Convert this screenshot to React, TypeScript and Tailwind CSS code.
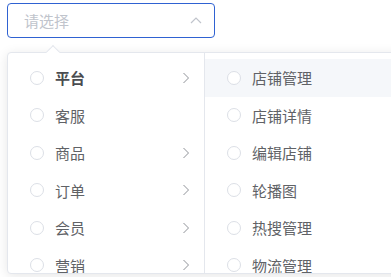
const font = {
  fontFamily: '"Noto Sans CJK SC", "Noto Sans", sans-serif',
};

type Item = { label: string; children?: boolean; active?: boolean; hover?: boolean };

const left: Item[] = [
  { label: "平台", children: true, active: true },
  { label: "客服" },
  { label: "商品", children: true },
  { label: "订单", children: true },
  { label: "会员", children: true },
  { label: "营销", children: true },
];

const right: Item[] = [
  { label: "店铺管理", hover: true },
  { label: "店铺详情" },
  { label: "编辑店铺" },
  { label: "轮播图" },
  { label: "热搜管理" },
  { label: "物流管理" },
];

function Row({ item }: { item: Item }) {
  return (
    <div
      className={`flex items-center h-[37.5px] pl-[22px] pr-[14px] ${
        item.hover ? "bg-[#f5f7fa]" : ""
      }`}
    >
      <span className="w-[14px] h-[14px] rounded-full border border-[#dcdfe6] bg-white shrink-0" />
      <span
        className={`ml-[11px] flex-1 text-[15px] leading-none ${
          item.active ? "font-bold text-[#4a4c50]" : "text-[#606266]"
        }`}
      >
        {item.label}
      </span>
      {item.children && (
        <svg width="8" height="12" viewBox="0 0 8 12" className="mr-[0px]">
          <path d="M1.5 1 L6.5 6 L1.5 11" fill="none" stroke="#909399" strokeWidth="1" />
        </svg>
      )}
    </div>
  );
}

export default function App() {
  return (
    <div className="w-[391px] h-[277px] overflow-hidden bg-white" style={font}>
      <div className="pt-[3px] pl-[7px]">
        <div className="w-[208px] h-[35px] rounded-[4px] border border-[#2f62d2] flex items-center pl-[16px] pr-[12px]">
          <span className="flex-1 text-[15px] text-[#c0c4cc] leading-none">请选择</span>
          <svg width="12" height="7" viewBox="0 0 12 7">
            <path d="M1 6 L6 1 L11 6" fill="none" stroke="#c0c4cc" strokeWidth="1.2" />
          </svg>
        </div>
      </div>
      <div className="relative mt-[14px] ml-[7px] w-[420px] h-[222px] border border-[#e4e7ed] rounded-[4px] bg-white shadow-[0_2px_12px_rgba(0,0,0,0.1)] flex">
        <div className="absolute -top-[6px] left-[40px] w-[10px] h-[10px] rotate-45 bg-white border-t border-l border-[#e4e7ed]" />
        <div className="w-[197px] border-r border-[#e4e7ed] pt-[6px] overflow-hidden">
          {left.map((it) => (
            <Row key={it.label} item={it} />
          ))}
        </div>
        <div className="flex-1 pt-[6px] overflow-hidden">
          {right.map((it) => (
            <Row key={it.label} item={it} />
          ))}
        </div>
      </div>
    </div>
  );
}
